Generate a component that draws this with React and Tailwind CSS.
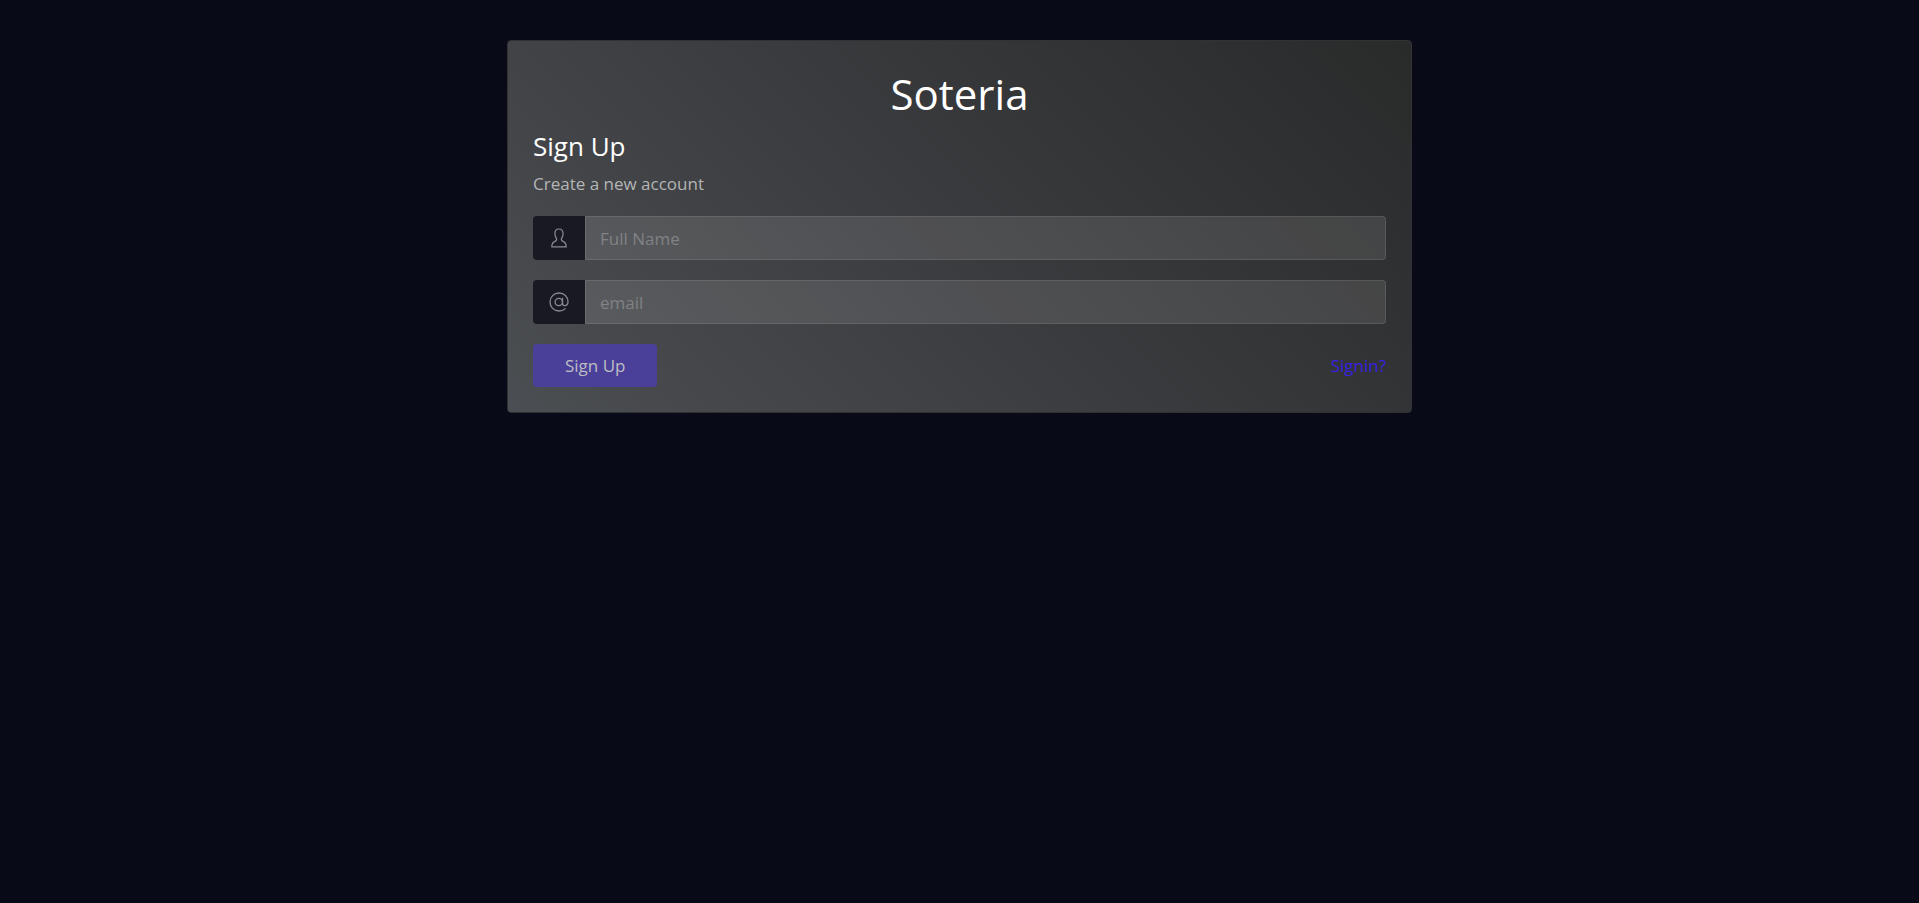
import React from "react";

function UserIcon() {
  return (
    <svg viewBox="0 0 20 20" className="size-5" fill="none" stroke="currentColor" strokeWidth="1.2" aria-hidden="true">
      <path d="M10 1C7.300 1 5.900 2.900 5.900 5.500C5.900 7.500 6.500 9.300 7.600 10.600C7.900 12.300 7.200 12.900 5.600 13.600C3.600 14.400 2.800 15.500 2.800 18.900H17.200C17.200 15.500 16.400 14.400 14.400 13.600C12.800 12.900 12.100 12.300 12.400 10.600C13.500 9.300 14.100 7.500 14.100 5.500C14.100 2.900 12.700 1 10 1Z" />
    </svg>
  );
}

function AtIcon() {
  return (
    <svg viewBox="0 0 20 20" className="size-5" fill="none" stroke="currentColor" strokeWidth="1.3" strokeLinecap="round" aria-hidden="true">
      <circle cx="9.800" cy="10" r="3.700" />
      <path d="M13.500 6.200V11.200C13.500 12.800 14.500 13.700 15.800 13.700C17.800 13.700 19 12 19 9.600C19 4.600 15 1 10 1C5 1 1 5 1 10C1 15 5 19 10 19C12.500 19 14.600 18.200 16.300 16.600" />
    </svg>
  );
}

function Field({ id, label, type, icon }) {
  return (
    <div className="mb-5 flex h-11">
      <label htmlFor={id} aria-label={label} className="flex w-[52px] items-center justify-center rounded-l bg-[#191924] text-[#8a8a91]">
        {icon}
      </label>
      <input
        id={id}
        type={type}
        placeholder={label}
        className="min-w-0 flex-1 rounded-r border border-white/10 bg-white/10 px-3.5 pt-0.5 text-[17px] text-white outline-none placeholder:text-[#808285]"
      />
    </div>
  );
}

export default function App() {
  return (
    <div className="min-h-screen bg-[#080a17] px-4 pt-10 font-['Open_Sans','Noto_Sans',sans-serif]">
      <main className="mx-auto max-w-[905px] rounded border border-[#313235] bg-linear-45 from-[#4b4e52] via-[#3a3b3e] to-[#292a2a] p-[25px]">
        <h1 className="mb-2 text-center text-[42px] leading-[56px] text-white">Soteria</h1>
        <h2 className="mb-2 text-[26px] leading-8 text-white">Sign Up</h2>
        <p className="mb-[18px] text-[17px] leading-7 text-[#b4b5b6]">Create a new account</p>
        <form>
          <Field id="name" label="Full Name" type="text" icon={<UserIcon />} />
          <Field id="email" label="email" type="email" icon={<AtIcon />} />
          <div className="flex items-center justify-between">
            <button type="button" className="h-[43px] rounded bg-[#4a3f99] px-8 text-[17px] text-[#bdbec3]">
              Sign Up
            </button>
            <a href="#signin" className="text-[17px] text-[#3720e0]">Signin?</a>
          </div>
        </form>
      </main>
    </div>
  );
}
